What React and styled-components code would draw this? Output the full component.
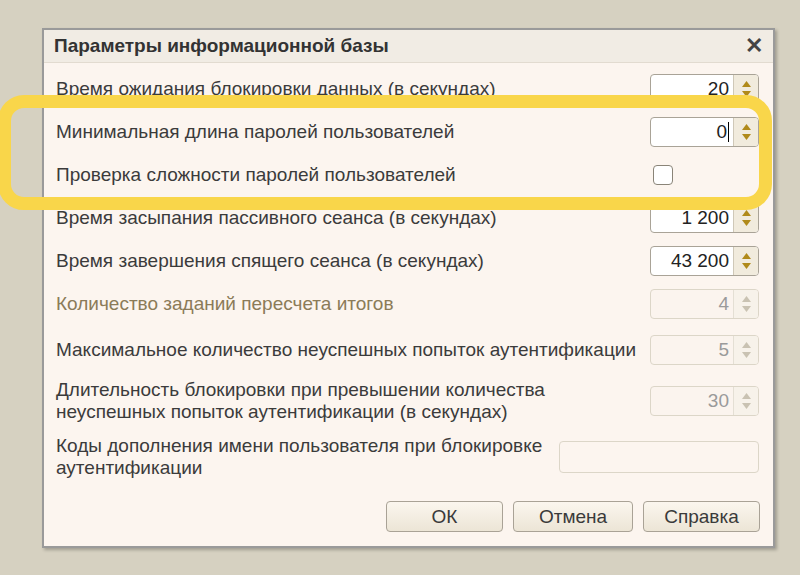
import React from "react";
import styled, { createGlobalStyle } from "styled-components";

const Global = createGlobalStyle`
  body { margin: 0; background: #d6d1c1; font-family: "Liberation Sans Narrow", "Liberation Sans", sans-serif; }
`;

const Page = styled.div`
  position: relative;
  width: 800px;
  height: 575px;
  overflow: hidden;
  padding: 28px 0 0 42px;
  box-sizing: border-box;
`;

const Dialog = styled.div`
  width: 733px;
  height: 520px;
  background: #fcf5ef;
  border: 2px solid #9a9a9a;
  box-shadow: 2px 2px 3px rgba(0, 0, 0, 0.25);
  display: flex;
  flex-direction: column;
  box-sizing: border-box;
`;

const TitleBar = styled.div`
  height: 32px;
  display: flex;
  align-items: center;
  justify-content: space-between;
  padding: 0 10px 0 10px;
  background: #f1ece4;
  border-bottom: 1px solid #e2dbd0;
  font-weight: bold;
  font-size: 19px;
  color: #333;
`;

const Close = styled.span`
  font-family: "Liberation Sans", sans-serif;
  font-size: 22px;
  font-weight: bold;
  color: #444;
`;

const Body = styled.div`
  padding: 4px 14px 0 12px;
  display: flex;
  flex-direction: column;
`;

const Row = styled.div`
  height: ${p => p.h}px;
  display: flex;
  align-items: center;
  justify-content: space-between;
`;

const Label = styled.div`
  font-size: 19px;
  line-height: 22px;
  color: ${p => (p.dim ? "#8b7b58" : "#3b3b3b")};
`;

const Spin = styled.div`
  width: 109px;
  height: 30px;
  display: flex;
  border: 1px solid ${p => (p.disabled ? "#dcd6c8" : "#a9a397")};
  border-radius: 4px;
  background: ${p => (p.disabled ? "#fbf4ee" : "#fff")};
  box-sizing: border-box;
  overflow: hidden;
`;

const SpinValue = styled.div`
  flex: 1;
  display: flex;
  align-items: center;
  justify-content: flex-end;
  padding-right: 4px;
  font-size: 19px;
  color: ${p => (p.disabled ? "#9a9a9a" : "#222")};
`;

const SpinArrows = styled.div`
  width: 24px;
  border-left: 1px solid ${p => (p.disabled ? "#e4dfd4" : "#cfc8b8")};
  background: ${p => (p.disabled ? "#f7f2ea" : "#f1ebdd")};
  display: flex;
  flex-direction: column;
  align-items: center;
  justify-content: center;
  gap: 4px;
`;

const Check = styled.div`
  width: 20px;
  height: 20px;
  border: 1px solid #8a8478;
  border-radius: 4px;
  background: #fff;
  margin-right: 86px;
  box-sizing: border-box;
`;

const TextInput = styled.div`
  width: 200px;
  height: 32px;
  border: 1px solid #dcd6c8;
  border-radius: 4px;
  box-sizing: border-box;
`;

const Buttons = styled.div`
  display: flex;
  justify-content: flex-end;
  gap: 10px;
  padding: 14px 13px 0 0;
`;

const Button = styled.div`
  width: ${p => p.w}px;
  height: 31px;
  display: flex;
  align-items: center;
  justify-content: center;
  border: 1px solid #a9a296;
  border-radius: 4px;
  background: linear-gradient(#fbf6ee, #ece5d6);
  font-size: 19px;
  color: #3a3a3a;
  box-sizing: border-box;
`;

const Highlight = styled.div`
  position: absolute;
  left: -2px;
  top: 95px;
  width: 774px;
  height: 115px;
  border: 13px solid #f9d64a;
  border-radius: 26px;
  box-sizing: border-box;
  pointer-events: none;
`;

const Caret = styled.span`
  display: inline-block;
  width: 1px;
  height: 20px;
  background: #000;
  margin-left: 1px;
`;

function Arrows({ disabled }) {
  const c = disabled ? "#c9c2b2" : "#b08a1a";
  return (
    <SpinArrows disabled={disabled}>
      <svg width="9" height="6" viewBox="0 0 9 6"><path d="M0 6 L4.5 0 L9 6Z" fill={c} /></svg>
      <svg width="9" height="6" viewBox="0 0 9 6"><path d="M0 0 L4.5 6 L9 0Z" fill={c} /></svg>
    </SpinArrows>
  );
}

function Spinner({ value, disabled, caret }) {
  return (
    <Spin disabled={disabled}>
      <SpinValue disabled={disabled}>{value}{caret && <Caret />}</SpinValue>
      <Arrows disabled={disabled} />
    </Spin>
  );
}

export default function App() {
  return (
    <Page>
      <Global />
      <Dialog>
        <TitleBar>
          <span>Параметры информационной базы</span>
          <Close>✕</Close>
        </TitleBar>
        <Body>
          <Row h={43}><Label>Время ожидания блокировки данных (в секундах)</Label><Spinner value="20" /></Row>
          <Row h={43}><Label>Минимальная длина паролей пользователей</Label><Spinner value="0" caret /></Row>
          <Row h={43}><Label>Проверка сложности паролей пользователей</Label><Check /></Row>
          <Row h={43}><Label>Время засыпания пассивного сеанса (в секундах)</Label><Spinner value="1 200" /></Row>
          <Row h={43}><Label>Время завершения спящего сеанса (в секундах)</Label><Spinner value="43 200" /></Row>
          <Row h={43}><Label dim>Количество заданий пересчета итогов</Label><Spinner value="4" disabled /></Row>
          <Row h={50}><Label>Максимальное количество неуспешных попыток аутентификации</Label><Spinner value="5" disabled /></Row>
          <Row h={52}><Label>Длительность блокировки при превышении количества<br />неуспешных попыток аутентификации (в секундах)</Label><Spinner value="30" disabled /></Row>
          <Row h={60}><Label>Коды дополнения имени пользователя при блокировке<br />аутентификации</Label><TextInput /></Row>
        </Body>
        <Buttons>
          <Button w={117}>ОК</Button>
          <Button w={120}>Отмена</Button>
          <Button w={117}>Справка</Button>
        </Buttons>
      </Dialog>
      <Highlight />
    </Page>
  );
}
